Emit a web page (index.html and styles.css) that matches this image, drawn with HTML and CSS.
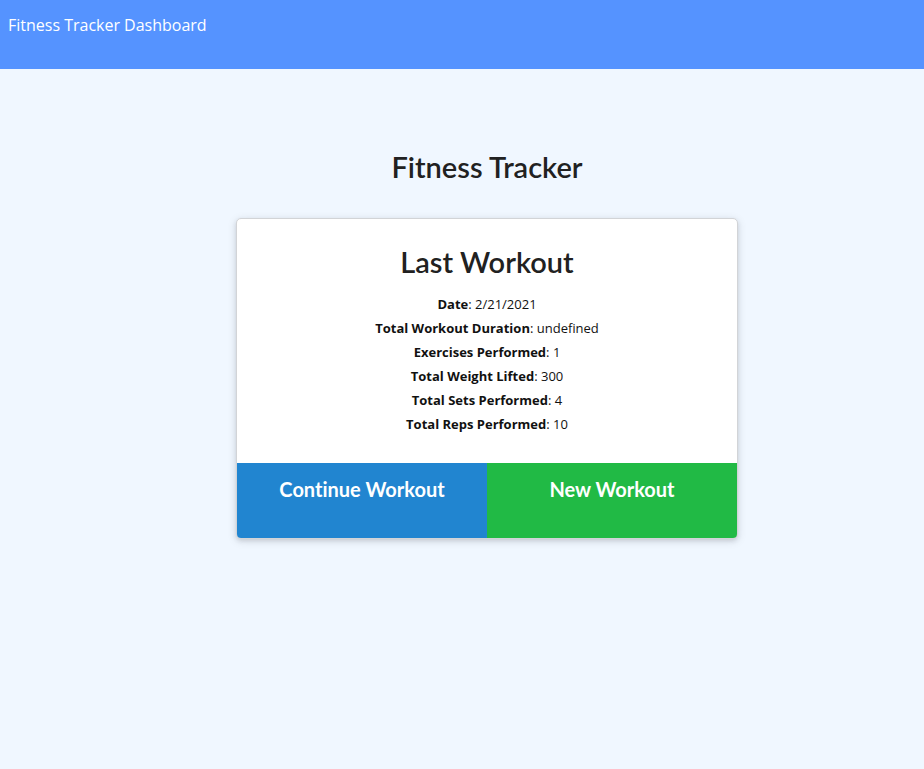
FILE: index.html
```
<!DOCTYPE html>
<html lang="en">
<head>
<meta charset="utf-8">
<meta name="viewport" content="width=device-width, initial-scale=1">
<title>Fitness Tracker</title>
<link rel="stylesheet" href="styles.css">
</head>
<body>
<nav class="navbar">
  <a class="nav-link" href="#">Fitness Tracker</a>
  <a class="nav-link" href="#">Dashboard</a>
</nav>
<main class="container">
  <h1 class="title">Fitness Tracker</h1>
  <section class="card">
    <div class="content">
      <h2 class="title">Last Workout</h2>
      <div class="stats">
        <p><strong>Date</strong>: 2/21/2021</p>
        <p><strong>Total Workout Duration</strong>: undefined</p>
        <p><strong>Exercises Performed</strong>: 1</p>
        <p><strong>Total Weight Lifted</strong>: 300</p>
        <p><strong>Total Sets Performed</strong>: 4</p>
        <p><strong>Total Reps Performed</strong>: 10</p>
      </div>
    </div>
    <div class="actions">
      <button class="action continue" type="button">Continue Workout</button>
      <button class="action new" type="button">New Workout</button>
    </div>
  </section>
</main>
</body>
</html>
```
FILE: styles.css
```
* {
  box-sizing: border-box;
}

body {
  margin: 0;
  min-height: 100vh;
  background: #f0f7ff;
  color: #111;
  font-family: "Open Sans", "Noto Sans", sans-serif;
  font-size: 13px;
  line-height: 24px;
}

.navbar {
  display: flex;
  gap: 4px;
  padding: 13px 8px 32px;
  background: #5593ff;
}

.nav-link {
  color: #fff;
  font-size: 16px;
  text-decoration: none;
}

.container {
  display: grid;
  grid-template-columns: minmax(0, 502px);
  justify-content: center;
  padding: 80px 0 32px 50px;
}

.title {
  margin: 0;
  color: #212121;
  font-family: Lato, sans-serif;
  font-size: 29px;
  font-weight: 600;
  line-height: 36px;
  text-align: center;
}

.card {
  margin-top: 33px;
  overflow: hidden;
  border: 1px solid #d2d4d7;
  border-radius: 5px;
  background: #fff;
  box-shadow: 0 2px 4px rgba(34, 36, 38, 0.12), 0 2px 10px rgba(34, 36, 38, 0.12);
}

.content {
  padding: 25px 16px 27px;
  text-align: center;
}

.stats {
  margin-top: 12px;
}

.stats p {
  margin: 0;
}

.stats strong {
  font-weight: 700;
}

.actions {
  display: flex;
}

.action {
  flex: 1;
  padding: 11px 16px 34px;
  border: 0;
  color: #fff;
  font-family: Lato, sans-serif;
  font-size: 20px;
  font-variant-ligatures: none;
  font-weight: 700;
  line-height: 30px;
}

.continue {
  background: #2185d0;
}

.new {
  background: #21ba45;
}
```
